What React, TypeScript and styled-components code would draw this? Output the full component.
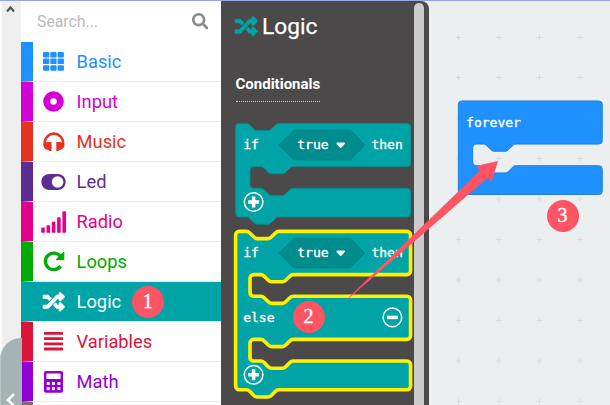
import React from "react";
import styled, { createGlobalStyle } from "styled-components";
import { FaRandom, FaSearch } from "react-icons/fa";

const Global = createGlobalStyle`
  * { box-sizing: border-box; }
  body { margin: 0; overflow: hidden; font-family: Roboto, sans-serif; }
`;

const Page = styled.div`
  position: relative;
  display: flex;
  width: 610px;
  height: 405px;
  overflow: hidden;
  border-top: 1px solid #98a6e4;
  background: #ebeff0;
`;

const Gutter = styled.div`
  display: flex;
  flex-direction: column;
  justify-content: space-between;
  width: 21px;
  flex: none;
  border-left: 2px solid #fff;
  background: #efefef;
`;

const ScrollUp = styled.svg`
  display: block;
  width: 9px;
  height: 8px;
  margin: 4px 0 0 4px;
`;

const CollapseTab = styled.div`
  position: relative;
  z-index: 1;
  width: 22px;
  height: 67px;
  margin-left: -2px;
  padding: 55px 0 0 5px;
  border-radius: 21px 0 0 0;
  border-left: 1px solid #b9c4c4;
  background: #a5b3b4;
  svg { display: block; width: 10px; height: 14px; }
`;

const Toolbox = styled.nav`
  width: 200px;
  flex: none;
  background: #fff;
  overflow: hidden;
`;

const SearchBar = styled.div`
  display: flex;
  align-items: center;
  justify-content: space-between;
  height: 41px;
  padding: 0 13px 0 16px;
  color: #b9b9b9;
  font-size: 15.8px;
  svg { color: #8b8b8b; }
`;

const Row = styled.div<{ $color: string; $selected?: boolean }>`
  display: flex;
  align-items: center;
  height: 40px;
  padding-left: 7px;
  border-left: 12px solid ${(p) => p.$color};
  border-bottom: 1px solid #ececec;
  background: ${(p) => (p.$selected ? p.$color : "#fff")};
  background-clip: padding-box;
  color: ${(p) => (p.$selected ? "#fff" : p.$color)};
  font-size: 18.3px;
`;

const IconCell = styled.span`
  display: flex;
  justify-content: center;
  width: 27px;
  margin-right: 9.6px;
`;

const Shuffle = styled(FaRandom)`
  stroke: currentColor;
  stroke-width: 16px;
  overflow: visible;
`;

const Flyout = styled.aside`
  display: flex;
  width: 208px;
  flex: none;
  justify-content: space-between;
  padding: 2px 5px 0 14px;
  border-top-right-radius: 8px;
  background: #4b4949;
`;

const FlyoutContent = styled.div`
  width: 178px;
  flex: none;
`;

const FlyoutTitle = styled.h1`
  display: flex;
  align-items: center;
  gap: 4.5px;
  height: 28px;
  margin: 9px 0 0;
  color: #fff;
  font-size: 22.7px;
  font-weight: 400;
  -webkit-text-stroke: 0.25px #fff;
  svg { color: #00a4a6; }
`;

const GroupLabel = styled.h2`
  display: inline-block;
  height: 32px;
  margin: 30px 0 0 0.5px;
  padding-top: 5px;
  border-bottom: 1px dotted #c4c4c4;
  color: #fff;
  font-size: 15px;
  font-weight: 700;
  line-height: 18px;
`;

const Scrollbar = styled.div`
  width: 10px;
  height: 410px;
  flex: none;
  border-radius: 5px 5px 0 0;
  background: #cbcbcb;
`;

const BlockList = styled.svg`
  display: block;
  width: 178px;
  height: 290px;
  overflow: visible;
`;

const Workspace = styled.main`
  flex: 1;
  svg { display: block; width: 181px; height: 404px; }
`;

const BlockText = styled.text`
  fill: #fff;
  stroke: #fff;
  stroke-width: 0.35px;
  font-family: "DejaVu Sans Mono", monospace;
  font-size: 13px;
`;

const Arrow = styled.svg`
  position: absolute;
  left: 0;
  top: -1px;
  width: 610px;
  height: 405px;
`;

const Badge = styled.div<{ $x: number; $y: number }>`
  position: absolute;
  left: ${(p) => p.$x - 16}px;
  top: ${(p) => p.$y - 17}px;
  width: 32px;
  height: 32px;
  border-radius: 50%;
  background: #ff5464;
  color: #fff;
  font: 20px/31px "Liberation Serif", serif;
  -webkit-text-stroke: 0.4px #fff;
  text-align: center;
`;

const NOTCH = "c2,0 3,1 4,2 l4,4 c1,1 2,2 4,2 h12 c2,0 3,-1 4,-2 l4,-4 c1,-1 2,-2 4,-2";
const NOTCH_BACK = "c-2,0 -3,1 -4,2 l-4,4 c-1,1 -2,2 -4,2 h-12 c-2,0 -3,-1 -4,-2 l-4,-4 c-1,-1 -2,-2 -4,-2";

/** Outline of a C-shaped block with one 24-unit mouth per arm. */
function blockPath(width: number, arms: number, stacked: boolean) {
  let d = `M0,4 a4,4 0 0,1 4,-4 ${stacked ? `h8 ${NOTCH}` : ""} H${width - 4} a4,4 0 0,1 4,4`;
  for (let i = 0; i < arms; i++) {
    d += ` v40 a4,4 0 0,1 -4,4 H64 ${NOTCH_BACK} h-8 a4,4 0 0,0 -4,4 v16 a4,4 0 0,0 4,4 h8 ${NOTCH} H${width - 4} a4,4 0 0,1 4,4`;
  }
  d += ` v24 a4,4 0 0,1 -4,4 ${stacked ? `H48 ${NOTCH_BACK}` : ""} H4 a4,4 0 0,1 -4,-4 z`;
  return d;
}

function RoundButton({ x, y, plus }: { x: number; y: number; plus?: boolean }) {
  return (
    <g stroke="#fff">
      <circle cx={x} cy={y} r="9.3" fill="none" strokeWidth="1.5" />
      <path d={`M${x - 5.5},${y} h11 ${plus ? `M${x},${y - 5.5} v11` : ""}`} strokeWidth="3.5" />
    </g>
  );
}

function Condition() {
  return (
    <>
      <path d="M43.5,21.6 L58.4,6.8 H115 L129.2,21.6 L115,36.4 H58.4 Z" fill="#008b8d" stroke="#007f81" strokeWidth=".8" />
      <BlockText x="7.6" y="25.4">if</BlockText>
      <BlockText x="61.7" y="25.4">true</BlockText>
      <path d="M101.8,20 h6.6 l-3.3,3.6 z" fill="#fff" stroke="#fff" strokeWidth="1.9" strokeLinejoin="round" />
      <BlockText x="135.8" y="25.4">then</BlockText>
    </>
  );
}

const icons = {
  grid: (
    <svg width="21" height="19" fill="currentColor">
      {[0, 7.3, 14.6].map((x) => [0, 6.6, 13.2].map((y) => <rect key={`${x}-${y}`} x={x} y={y} width="6.3" height="5.5" rx=".9" />))}
    </svg>
  ),
  ring: (
    <svg width="21" height="21"><circle cx="10.5" cy="10.5" r="6.8" fill="none" stroke="currentColor" strokeWidth="7" /></svg>
  ),
  headphones: (
    <svg width="22" height="20" viewBox="0 0 22 20">
      <path d="M1.7,13 V10.8 a9.2,9.2 0 0 1 18.4,0 V13" fill="none" stroke="currentColor" strokeWidth="2.6" />
      <path d="M8.5,10 V19 H6.2 L5.6,18 C2.6,17.6 .4,15.8 .4,13.3 C.4,11.1 2.6,10.2 5.6,10 Z M13.3,10 V19 H15.6 L16.2,18 C19.2,17.6 21.4,15.8 21.4,13.3 C21.4,11.1 19.2,10.2 16.2,10 Z" fill="currentColor" />
    </svg>
  ),
  toggle: (
    <svg width="25" height="16"><rect x=".3" y="0" width="24.4" height="16" rx="8" fill="currentColor" /><circle cx="16.6" cy="8" r="5.8" fill="#fff" /></svg>
  ),
  signal: (
    <svg width="25" height="22" fill="currentColor">
      {[5.2, 7.6, 11, 15.5, 21.5].map((h, i) => <rect key={h} x={0.2 + i * 5.3} y={21.8 - h} width="3.6" height={h} rx=".6" />)}
    </svg>
  ),
  repeat: (
    <svg width="22" height="21" viewBox="0 0 22 21">
      <path d="M17.4,5.4 A8.3,8.3 0 1 0 17.6,15" fill="none" stroke="currentColor" strokeWidth="3.3" />
      <path d="M20.8,1 V8.6 H13.2 Z" fill="currentColor" stroke="currentColor" strokeWidth="1" strokeLinejoin="round" />
    </svg>
  ),
  shuffle: <Shuffle size={21.5} />,
  lines: (
    <svg width="19" height="19" fill="currentColor">{[0, 5.2, 10.4, 15.6].map((y) => <rect key={y} y={y} width="19" height="2.8" rx=".4" />)}</svg>
  ),
  calculator: (
    <svg width="19" height="22" viewBox="0 0 19 22">
      <rect width="19" height="21.8" rx="1.8" fill="currentColor" />
      <g fill="#fff">
        <rect x="2.4" y="2.6" width="14.2" height="5.4" rx=".4" />
        <rect x="2.7" y="11" width="3" height="2.9" /><rect x="8" y="11" width="3" height="2.9" /><rect x="13.4" y="11" width="3" height="2.9" />
        <rect x="2.7" y="16.2" width="3" height="2.9" /><rect x="8" y="16.2" width="3" height="2.9" /><rect x="13.4" y="16.2" width="3" height="2.9" />
      </g>
    </svg>
  ),
};

const categories: { name: string; color: string; icon: keyof typeof icons; selected?: boolean }[] = [
  { name: "Basic", color: "#1e90ff", icon: "grid" },
  { name: "Input", color: "#d400d4", icon: "ring" },
  { name: "Music", color: "#e63022", icon: "headphones" },
  { name: "Led", color: "#5c2d91", icon: "toggle" },
  { name: "Radio", color: "#e3008c", icon: "signal" },
  { name: "Loops", color: "#00aa00", icon: "repeat" },
  { name: "Logic", color: "#00a4a6", icon: "shuffle", selected: true },
  { name: "Variables", color: "#dc143c", icon: "lines" },
  { name: "Math", color: "#9400d3", icon: "calculator" },
];

export default function App() {
  return (
    <Page>
      <Global />
      <Gutter>
        <ScrollUp viewBox="0 0 9 8"><path d="M1,6.5 L4.5,2.5 L8,6.5" fill="none" stroke="#555" strokeWidth="2.2" /></ScrollUp>
        <CollapseTab>
          <svg viewBox="0 0 10 14"><path d="M8,1 L2,7 L8,13" fill="none" stroke="#fff" strokeWidth="2.6" /></svg>
        </CollapseTab>
      </Gutter>
      <Toolbox>
        <SearchBar><span>Search...</span><FaSearch size={16.5} /></SearchBar>
        {categories.map((c) => (
          <Row key={c.name} $color={c.color} $selected={c.selected}>
            <IconCell>{icons[c.icon]}</IconCell>
            {c.name}
          </Row>
        ))}
        <Row $color="#717171" />
      </Toolbox>
      <Flyout>
        <FlyoutContent>
          <FlyoutTitle><Shuffle size={22.5} />Logic</FlyoutTitle>
          <GroupLabel>Conditionals</GroupLabel>
          <BlockList>
            <g transform="translate(.6,21.4)">
              <path d={blockPath(194.4, 1, true)} transform="scale(.9)" fill="#00a4a6" stroke="#008f91" />
              <Condition />
              <RoundButton x={18} y={78.6} plus />
            </g>
            <g transform="translate(.6,129.4)">
              <path d={blockPath(194.4, 2, true)} transform="scale(.9)" fill="#00a4a6" stroke="#fff200" strokeWidth="4" strokeLinejoin="round" />
              <Condition />
              <BlockText x="7.6" y="90.2">else</BlockText>
              <RoundButton x={156.8} y={86} />
              <RoundButton x={18} y={143.4} plus />
            </g>
          </BlockList>
        </FlyoutContent>
        <Scrollbar />
      </Flyout>
      <Workspace>
        <svg>
          {[29.5, 70, 110.5, 151].map((x) =>
            [-4.5, 36.5, 76.5, 117, 157.5, 198, 238.5, 279, 319.5, 360, 400.5].map((y) => (
              <path key={`${x}-${y}`} d={`M${x - 3},${y} h6 M${x},${y - 3} v6`} stroke="#d8dddf" strokeWidth="1" />
            ))
          )}
          <g transform="translate(29.3,99.9)">
            <path d={blockPath(160, 1, false)} transform="scale(.9)" fill="#1e90ff" stroke="#1a7bd9" />
            <BlockText x="7.8" y="26">forever</BlockText>
          </g>
        </svg>
      </Workspace>
      <Arrow>
        <path d="M341,305 L480,170.5 L476.7,165.7 L498,161 L491.7,181.7 L487.7,177.7 Z" fill="#ff5464" />
      </Arrow>
      <Badge $x={147.7} $y={302}>1</Badge>
      <Badge $x={308.5} $y={317}>2</Badge>
      <Badge $x={562.6} $y={216}>3</Badge>
    </Page>
  );
}
